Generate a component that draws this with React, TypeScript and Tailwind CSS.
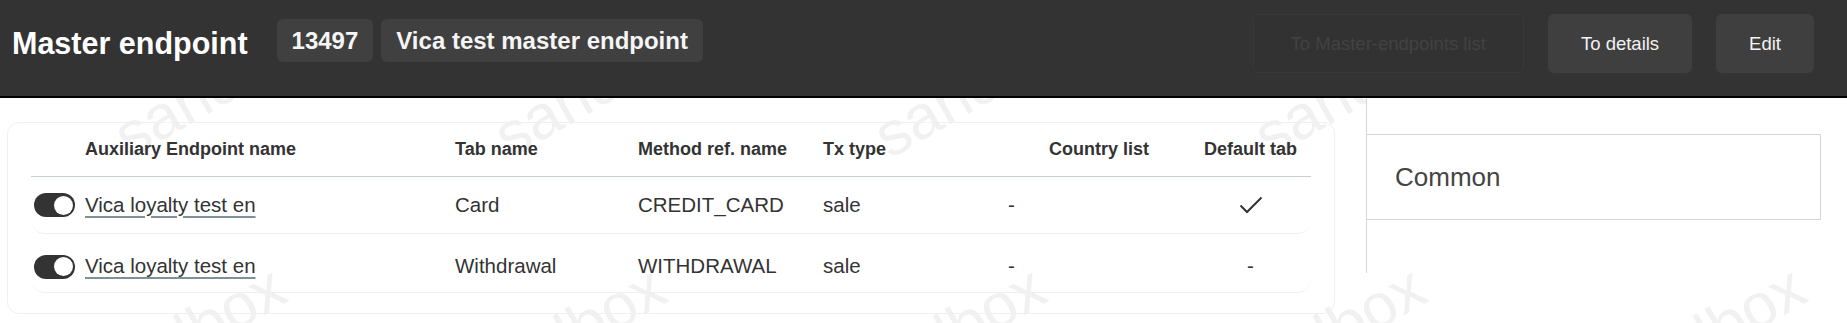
import React from 'react';

interface IRow {
  name: string;
  tab: string;
  method: string;
  tx: string;
  country: string;
  isDefault: boolean;
}

const rows: IRow[] = [
  { name: 'Vica loyalty test en', tab: 'Card', method: 'CREDIT_CARD', tx: 'sale', country: '-', isDefault: true },
  { name: 'Vica loyalty test en', tab: 'Withdrawal', method: 'WITHDRAWAL', tx: 'sale', country: '-', isDefault: false },
];

// watermark words: two staggered rows, left/baseline of each word
const marks: Array<{ x: number; y: number }> = [];
for (let k = 0; k < 6; k++) {
  marks.push({ x: 135 + 380 * k, y: 160 });
  marks.push({ x: 92 + 380 * k, y: 418 });
}

function Toggle() {
  return (
    <span className="flex h-[24px] w-[41px] flex-none items-center justify-end rounded-full bg-[#333333] pr-[2px]">
      <span className="h-[19px] w-[19px] rounded-full bg-white" />
    </span>
  );
}

function Check() {
  return (
    <svg width="24" height="18" viewBox="0 0 24 18" fill="none">
      <path d="M1.5 9.5 L8 16 L22.5 1.5" stroke="#333333" strokeWidth="2" />
    </svg>
  );
}

export default function App() {
  return (
    <div className="relative h-[323px] w-[1847px] overflow-hidden bg-white font-['Liberation_Sans',Arial,sans-serif] text-[#333333]">
      <div className="pointer-events-none absolute inset-0 z-0">
        {marks.map((m, i) => (
          <span
            key={i}
            className="absolute origin-bottom-left -rotate-[30deg] whitespace-nowrap text-[62px] leading-none text-[#f1f1f1]"
            style={{ left: m.x, top: m.y - 54 }}
          >
            sandbox
          </span>
        ))}
      </div>

      <header className="relative z-10 flex h-[98px] items-center justify-between border-b-2 border-black bg-[#333333] pb-[9px] pl-[12px] pr-[33px]">
        <div className="flex items-center">
          <h1 className="text-[30.5px] font-bold leading-none text-white">Master endpoint</h1>
          <div className="mb-[6px] ml-[29px] flex gap-[8px]">
            <span className="flex h-[43px] items-center rounded-[6px] bg-[#404040] px-[15px] text-[24px] font-bold text-[#f5f5f5]">
              13497
            </span>
            <span className="flex h-[43px] items-center rounded-[6px] bg-[#404040] px-[15px] text-[24px] font-bold text-[#f5f5f5]">
              Vica test master endpoint
            </span>
          </div>
        </div>
        <div className="flex items-center gap-[24px]">
          <button
            type="button"
            disabled
            className="h-[59px] rounded-[6px] border border-[#393939] bg-[#323232] px-[37px] text-[18.5px] text-[#424242]"
          >
            To Master-endpoints list
          </button>
          <button type="button" className="h-[59px] rounded-[6px] bg-[#3f3f3f] px-[33px] text-[18.5px] text-[#f2f2f2]">
            To details
          </button>
          <button type="button" className="h-[59px] rounded-[6px] bg-[#3f3f3f] px-[33px] text-[18.5px] text-[#f2f2f2]">
            Edit
          </button>
        </div>
      </header>

      <main className="relative z-[1] flex">
        <div className="pl-[7px] pt-[24px]">
          <div className="h-[192px] w-[1328px] rounded-[12px] border border-[#eff0f3] px-[23px]">
            <div className="flex h-[54px] items-center border-b border-[#c6ced4] text-[18px] font-bold">
              <div className="w-[424px] pl-[54px]">Auxiliary Endpoint name</div>
              <div className="w-[183px]">Tab name</div>
              <div className="w-[185px]">Method ref. name</div>
              <div className="w-[185px]">Tx type</div>
              <div className="w-[182px] text-center">Country list</div>
              <div className="w-[121px] text-center">Default tab</div>
            </div>
            {rows.map((row, index) => (
              <div
                key={index}
                className={
                  index === 0
                    ? 'flex h-[57px] items-center rounded-[14px] border-b border-[#eff0f4] text-[20.5px]'
                    : 'flex h-[59px] items-center rounded-[14px] border-b border-[#eff0f4] pt-[7px] text-[20.5px]'
                }
              >
                <div className="flex w-[424px] items-center gap-[10px] pl-[3px]">
                  <Toggle />
                  <a href="#" className="underline decoration-[#7f9096] decoration-[1.5px] underline-offset-[4px]">
                    {row.name}
                  </a>
                </div>
                <div className="w-[183px]">{row.tab}</div>
                <div className="w-[185px]">{row.method}</div>
                <div className="w-[185px]">{row.tx}</div>
                <div className="w-[182px]">{row.country}</div>
                <div className="flex w-[121px] justify-center">{row.isDefault ? <Check /> : '-'}</div>
              </div>
            ))}
          </div>
        </div>

        <aside className="ml-[31px] h-[175px] w-[481px] border-l border-[#d6d6d6] bg-white pt-[36px]">
          <div className="flex h-[86px] w-[454px] items-center border-y border-r border-[#d6d6d6] pl-[28px] text-[26px] text-[#444444]">
            Common
          </div>
        </aside>
      </main>
    </div>
  );
}
